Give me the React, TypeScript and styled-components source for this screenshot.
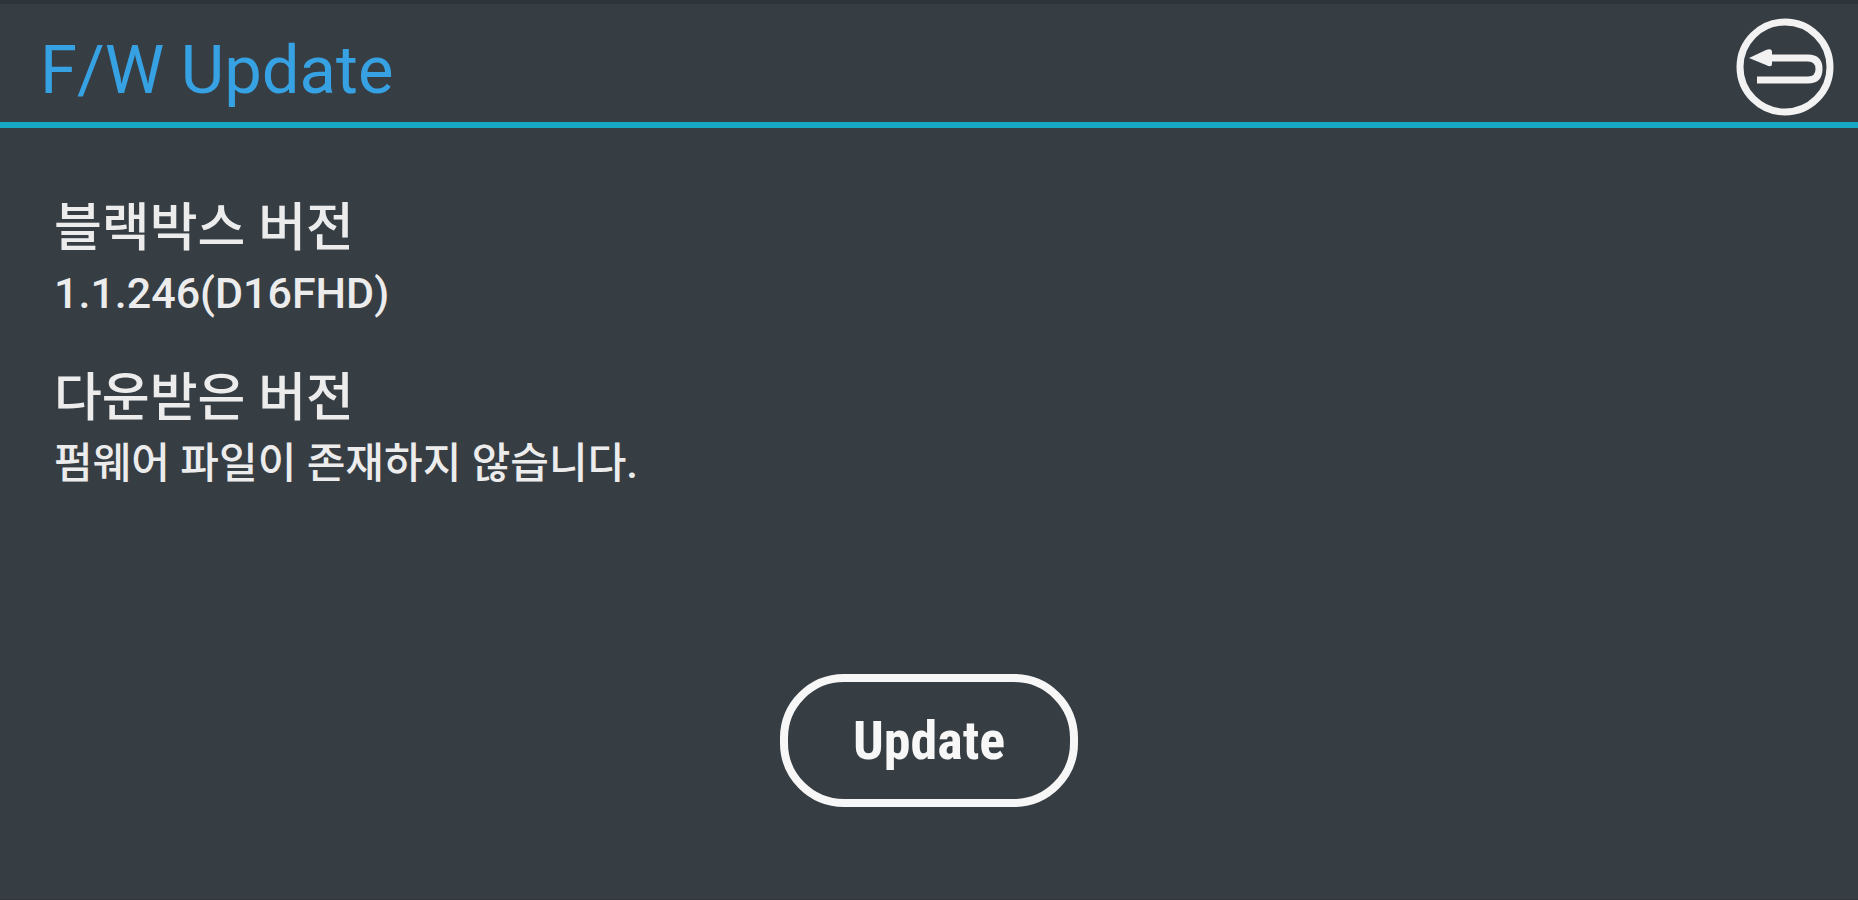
import React from "react";
import styled, { createGlobalStyle } from "styled-components";

const GlobalStyle = createGlobalStyle`
  * { box-sizing: border-box; }
  body { margin: 0; background: #363d43; }
`;

const Screen = styled.div`
  display: flex;
  flex-direction: column;
  min-height: 100vh;
  background: #363d43;
  border-top: 4px solid #2e343a;
  border-bottom: 1px solid #30343b;
  color: #ececec;
  font-family: Roboto, "Noto Sans CJK KR", sans-serif;
`;

const Header = styled.header`
  display: flex;
  align-items: flex-end;
  justify-content: space-between;
  height: 124px;
  padding: 0 24px 6px 40px;
  border-bottom: 6px solid #17a6c4;
`;

const Title = styled.h1`
  margin: 0;
  color: #36a2e3;
  font-size: 67px;
  line-height: 92px;
  font-weight: 400;
`;

const BackButton = styled.button`
  display: flex;
  padding: 0;
  border: 0;
  background: none;
  color: #f2f2f2;
  cursor: pointer;
`;

const Versions = styled.dl`
  display: flex;
  flex-direction: column;
  gap: 40px;
  margin: 0;
  padding: 68px 54px 0;
`;

const Version = styled.div`
  line-height: 65px;
`;

const VersionName = styled.dt`
  font-size: 52px;
  font-weight: 500;
`;

const VersionValue = styled.dd`
  margin: 0;
  font-size: 42px;
  font-weight: 500;
`;

const VersionNumber = styled(VersionValue)`
  font-size: 43px;
`;

const Actions = styled.div`
  display: flex;
  justify-content: center;
  margin-top: auto;
  padding-bottom: 92px;
`;

const UpdateButton = styled.button`
  width: 298px;
  height: 133px;
  padding: 0;
  border: 8px solid #f7f7f7;
  border-radius: 64px;
  background: none;
  color: #f7f7f7;
  font-family: "Roboto Condensed", "Liberation Sans Narrow", Roboto, sans-serif;
  font-size: 54px;
  font-weight: 700;
  line-height: 64px;
  cursor: pointer;
`;

function BackIcon() {
  return (
    <svg width="98" height="98" viewBox="0 0 98 98" fill="none" stroke="currentColor" aria-hidden="true">
      <circle cx="49" cy="49" r="45" strokeWidth="7" />
      <path d="M34 40H72Q83 40 83 51Q83 62 72 62H21" strokeWidth="7" />
      <path d="M13 40L30 32Q36 30 36 34V46Q36 50 30 47Z" fill="currentColor" stroke="none" />
    </svg>
  );
}

export default function App() {
  return (
    <>
      <GlobalStyle />
      <Screen>
        <Header>
          <Title>F/W Update</Title>
          <BackButton type="button" aria-label="Back">
            <BackIcon />
          </BackButton>
        </Header>
        <Versions>
          <Version>
            <VersionName>블랙박스 버전</VersionName>
            <VersionNumber>1.1.246(D16FHD)</VersionNumber>
          </Version>
          <Version>
            <VersionName>다운받은 버전</VersionName>
            <VersionValue>펌웨어 파일이 존재하지 않습니다.</VersionValue>
          </Version>
        </Versions>
        <Actions>
          <UpdateButton type="button">Update</UpdateButton>
        </Actions>
      </Screen>
    </>
  );
}
